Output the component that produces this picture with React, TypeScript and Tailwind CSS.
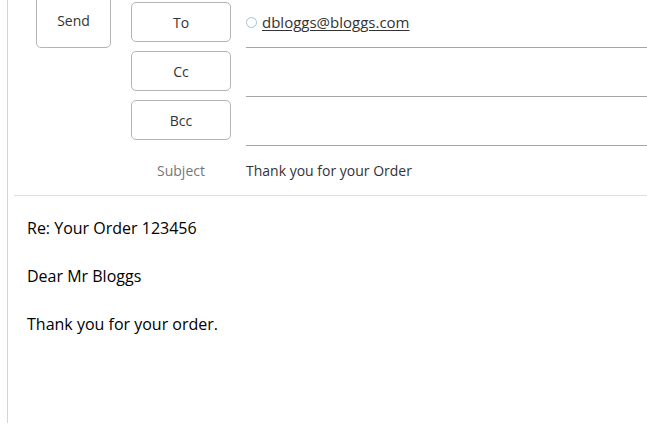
const uiFont = "font-['Open_Sans','Noto_Sans',sans-serif]";

function FieldButton({ label }: { label: string }) {
  return (
    <div className="flex h-[49px] items-start pt-[3px]">
      <button className="h-[40px] w-[100px] rounded-[5px] border border-[#b4b4b4] bg-white text-[14px] text-[#333]">
        {label}
      </button>
    </div>
  );
}

function FieldLine({ children }: { children?: React.ReactNode }) {
  return (
    <div className="flex h-[49px] items-center border-b border-[#a6a6a6] pb-[2px]">
      {children}
    </div>
  );
}

export default function App() {
  return (
    <div className={`h-[424px] w-[647px] overflow-hidden bg-white ${uiFont}`}>
      <div className="ml-[7px] h-full border-l border-[#d4d4d4]">
        <div className="-mt-px flex">
          <div className="pl-[28px] pr-[20px]">
            <button className="-mt-[6px] h-[55px] w-[75px] rounded-[5px] border border-[#b4b4b4] bg-white text-[14px] text-[#333]">
              Send
            </button>
          </div>
          <div className="flex flex-col">
            <FieldButton label="To" />
            <FieldButton label="Cc" />
            <FieldButton label="Bcc" />
            <div className="flex h-[49px] w-[100px] items-center justify-center text-[14px] text-[#767676]">
              Subject
            </div>
          </div>
          <div className="ml-[15px] flex flex-1 flex-col">
            <FieldLine>
              <span className="mr-[5px] inline-block h-[11px] w-[11px] rounded-full border border-[#a9bfd3]" />
              <span className="text-[15px] text-[#333] underline underline-offset-2">dbloggs@bloggs.com</span>
            </FieldLine>
            <FieldLine />
            <FieldLine />
            <div className="flex h-[49px] items-center text-[14px] text-[#333]">
              Thank you for your Order
            </div>
          </div>
        </div>
        <div className="ml-[6px] h-px bg-[#e0e0e0]" />
        <div className="flex flex-col gap-[29px] pt-[23px] pl-[19px] text-[16px] leading-[19px] text-black">
          <p>Re: Your Order 123456</p>
          <p>Dear Mr Bloggs</p>
          <p>Thank you for your order.</p>
        </div>
      </div>
    </div>
  );
}
